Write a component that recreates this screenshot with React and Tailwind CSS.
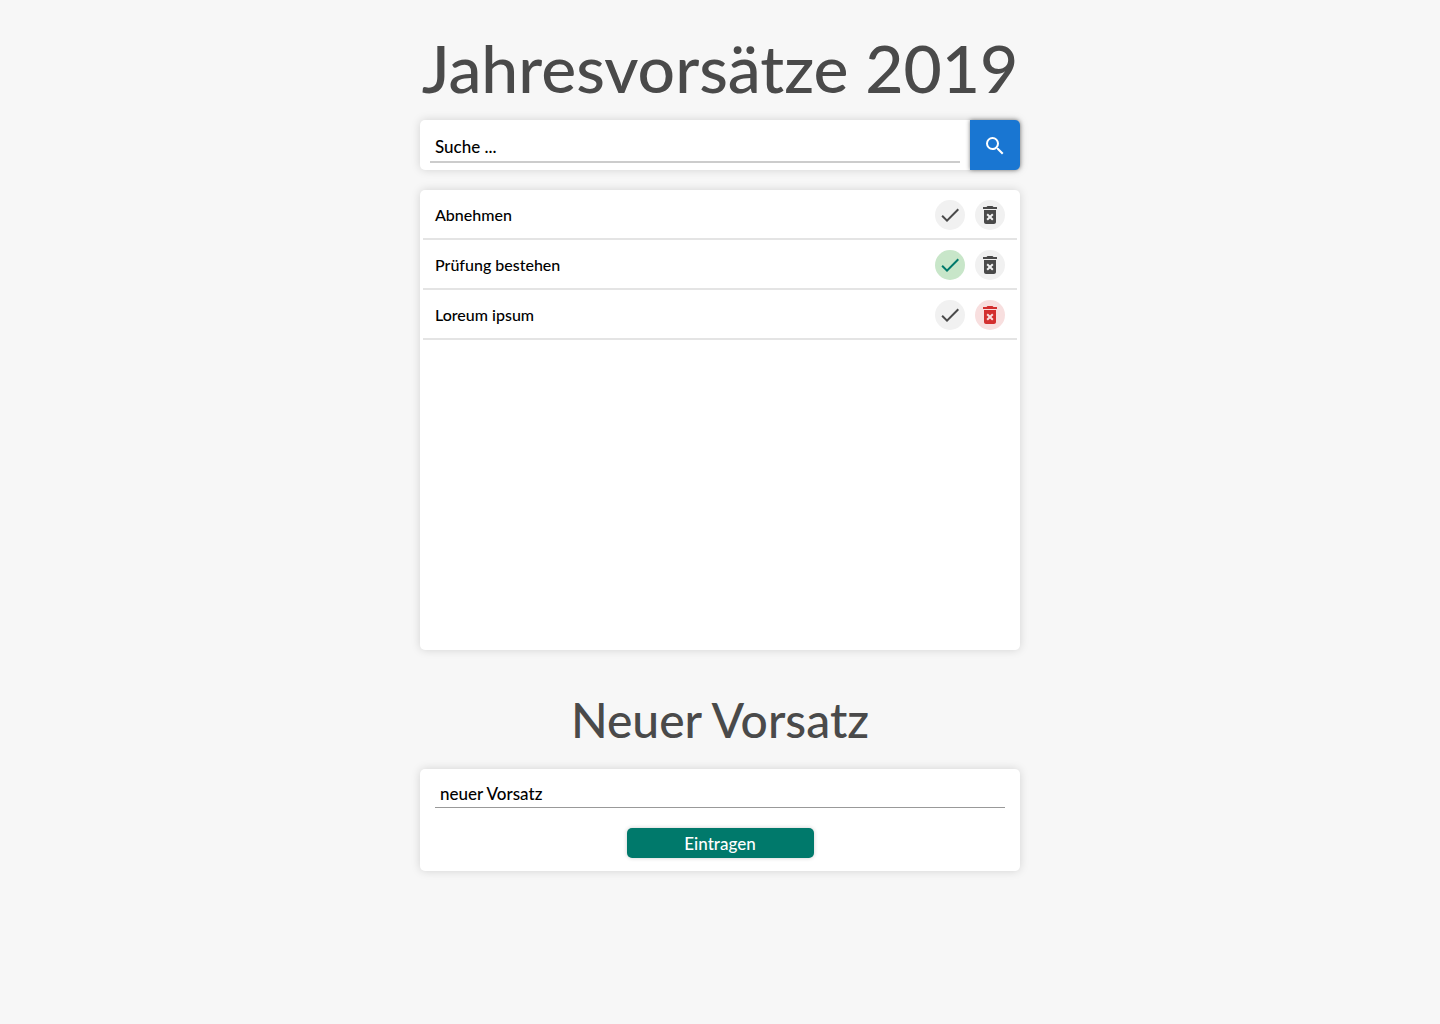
import { MdSearch, MdCheck, MdDeleteForever } from "react-icons/md";

const resolutions = [
  { text: "Abnehmen", check: "bg-[#f1f1f1] text-[#4a4a4a]", trash: "bg-[#f1f1f1] text-[#4a4a4a]" },
  { text: "Prüfung bestehen", check: "bg-[#c8e6c9] text-[#00796b]", trash: "bg-[#f1f1f1] text-[#4a4a4a]" },
  { text: "Loreum ipsum", check: "bg-[#f1f1f1] text-[#4a4a4a]", trash: "bg-[#f8dfdf] text-[#d32f2f]" },
];

const card = "rounded-[5px] bg-white shadow-[0_0_10px_rgba(0,0,0,0.15)]";
const round = "flex size-[30px] items-center justify-center rounded-full";

export default function App() {
  return (
    <div className="min-h-screen bg-[#f7f7f7] px-4 pt-5 pb-10 font-['Lato',sans-serif] text-[17px] font-medium text-black">
      <main className="mx-auto max-w-[600px]">
        <h1 className="pb-1 text-center text-[66px] leading-[96px] font-medium whitespace-nowrap text-[#4a4a4a]">
          Jahresvorsätze 2019
        </h1>

        <form role="search" className={`flex h-[50px] ${card}`}>
          <div className="flex-1 px-2.5">
            <input
              type="search"
              aria-label="Suche"
              placeholder="Suche ..."
              className="h-[43px] w-full border-b-2 border-[#cccccc] px-[5px] pt-3 outline-none placeholder:text-black"
            />
          </div>
          <button
            type="button"
            aria-label="Suchen"
            className="flex w-[50px] items-center justify-center rounded-r-[5px] bg-[#1976d2] pt-0.5 text-white shadow-[0_0_4px_rgba(0,0,0,0.5)]"
          >
            <MdSearch size={24} />
          </button>
        </form>

        <ul className={`mt-5 min-h-[460px] px-[3px] text-base ${card}`}>
          {resolutions.map((item) => (
            <li key={item.text} className="flex h-[50px] items-center gap-2.5 border-b-2 border-[#e4e4e4] px-3 pt-0.5">
              <span className="flex-1">{item.text}</span>
              <button type="button" aria-label={`${item.text} erledigt`} className={`${round} ${item.check}`}>
                <MdCheck size={24} />
              </button>
              <button type="button" aria-label={`${item.text} löschen`} className={`${round} ${item.trash}`}>
                <MdDeleteForever size={24} />
              </button>
            </li>
          ))}
        </ul>

        <h2 className="mt-10 mb-[19px] text-center text-5xl leading-[60px] font-medium text-[#4a4a4a]">
          Neuer Vorsatz
        </h2>

        <form className={`flex flex-col items-center px-[15px] pt-2 pb-[13px] ${card}`}>
          <input
            type="text"
            aria-label="Neuer Vorsatz"
            placeholder="neuer Vorsatz"
            className="h-[31px] w-full border-b border-[#999999] px-[5px] pt-0.5 outline-none placeholder:text-black"
          />
          <button
            type="button"
            className="mt-5 h-[30px] w-[187px] rounded-[5px] bg-[#00796b] pt-0.5 leading-7 text-white shadow-[0_0_4px_rgba(0,0,0,0.2)]"
          >
            Eintragen
          </button>
        </form>
      </main>
    </div>
  );
}
